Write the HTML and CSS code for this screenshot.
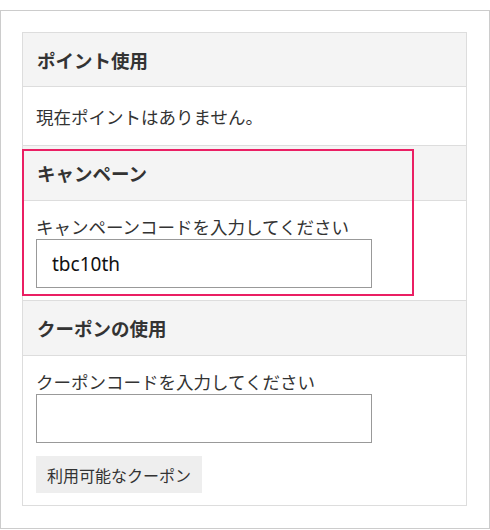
FILE: index.html
```html
<!DOCTYPE html>
<html lang="ja">
<head>
    <meta charset="UTF-8">
    <meta name="viewport" content="width=device-width, initial-scale=1.0">
    <title>ポイント・クーポン</title>
    <link rel="stylesheet" href="styles.css">
</head>
<body>

<div class="panel">
    <div class="box">

        <!-- ポイント -->
        <div class="sec">
            <div class="sec-head">ポイント使用</div>
            <div class="sec-body sec-body--text">現在ポイントはありません。</div>
        </div>

        <!-- キャンペーン -->
        <div class="sec sec--campaign">
            <div class="sec-head">キャンペーン</div>
            <div class="sec-body">
                <label for="campaign">キャンペーンコードを入力してください</label>
                <input type="text" id="campaign" class="code" value="tbc10th">
            </div>
            <div class="highlight"></div>
        </div>

        <!-- クーポン -->
        <div class="sec">
            <div class="sec-head">クーポンの使用</div>
            <div class="sec-body">
                <label for="coupon">クーポンコードを入力してください</label>
                <input type="text" id="coupon" class="code">
                <button class="coupon-btn">利用可能なクーポン</button>
            </div>
        </div>

    </div>
</div>

</body>
</html>
```

FILE: styles.css
```css
* {
    box-sizing: border-box;
}

body {
    margin: 0;
    padding: 0;
    background: #fff;
    color: #333;
    font-family: "Noto Sans CJK JP", "Noto Sans", sans-serif;
}

.panel {
    width: 490px;
    margin-top: 10px;
    border: 1px solid #ccc;
    padding: 21px 22px 22px 21px;
}

.box {
    border: 1px solid #ddd;
}

.sec {
    position: relative;
}

.sec-head {
    display: flex;
    align-items: center;
    height: 54px;
    padding: 0 14px;
    background-color: #f4f4f4;
    border-bottom: 1px solid #ddd;
    font-size: 18.5px;
    font-weight: bold;
}

.sec + .sec .sec-head {
    height: 56px;
    border-top: 1px solid #ddd;
}

.sec-body {
    padding: 14px 14px 12px 13px;
    font-size: 17.5px;
    line-height: 24px;
}

.sec-body--text {
    padding-top: 18px;
    padding-bottom: 16px;
}

label {
    display: block;
}

.code {
    display: block;
    width: 336px;
    height: 49px;
    margin: 0;
    padding: 0 15px;
    border: 1px solid #999;
    border-radius: 0;
    font-family: "Noto Sans", sans-serif;
    font-size: 19px;
    color: #111;
    outline: none;
}

.coupon-btn {
    display: block;
    height: 37px;
    margin-top: 13px;
    padding: 0 11px;
    border: none;
    background-color: #eee;
    color: #333;
    font-family: "Noto Sans CJK JP", "Noto Sans", sans-serif;
    font-size: 16px;
}

/* 注目枠 */
.highlight {
    position: absolute;
    top: 4px;
    left: -1px;
    width: 392px;
    height: 147px;
    border: 2px solid #ea1f63;
    pointer-events: none;
}
```
